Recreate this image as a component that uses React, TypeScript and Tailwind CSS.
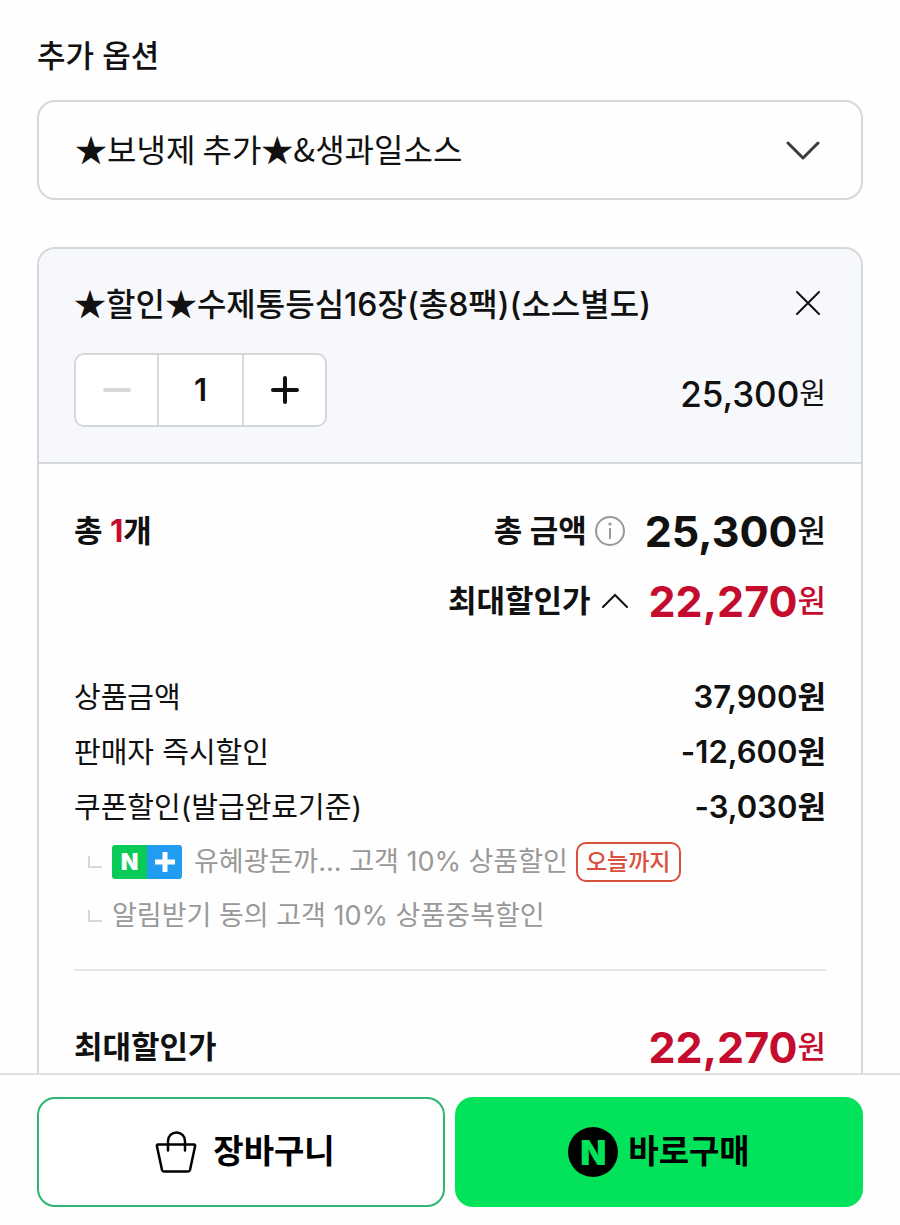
import { useState } from 'react';
import clsx from 'clsx';

const UNIT_PRICE = 37900;
const SELLER_DISCOUNT = 12600;
const COUPON_DISCOUNT = 3030;

const won = (value: number) => value.toLocaleString('en-US');

interface AmountProps {
  value: number;
  accent?: boolean;
}

function Amount({ value, accent }: AmountProps) {
  return (
    <span className={clsx('flex items-center text-[43px] font-bold', accent ? 'text-[#c40d2e]' : 'text-[#111]')}>
      {won(value)}
      <span className="text-[31px] font-medium">원</span>
    </span>
  );
}

interface PriceRowProps {
  label: string;
  value: number;
}

function PriceRow({ label, value }: PriceRowProps) {
  return (
    <div className="flex h-[55px] items-center justify-between">
      <dt>{label}</dt>
      <dd className="text-[31px] font-semibold">{won(value)}원</dd>
    </div>
  );
}

function Branch() {
  return <span className="ml-[14px] h-3 w-[14px] shrink-0 border-b-2 border-l-2 border-[#d9d9d9]" aria-hidden="true" />;
}

function MembershipBadge() {
  return (
    <span className="flex h-[34px] w-[70px] shrink-0 overflow-hidden rounded-[3px] text-white">
      <span className="flex flex-1 items-center justify-center bg-[#0bcb58] text-[23px] font-black">N</span>
      <span className="flex flex-1 items-center justify-center bg-[#209cf0]">
        <svg width="20" height="20" viewBox="0 0 20 20" fill="none" stroke="currentColor" strokeWidth="5" aria-hidden="true">
          <path d="M10 0v20M0 10h20" />
        </svg>
      </span>
    </span>
  );
}

export default function App() {
  const [quantity, setQuantity] = useState(1);
  const [open, setOpen] = useState(true);

  const salePrice = (UNIT_PRICE - SELLER_DISCOUNT) * quantity;
  const bestPrice = salePrice - COUPON_DISCOUNT * quantity;

  return (
    <div className="flex h-dvh flex-col bg-[#fefefe] font-['Inter','Noto_Sans_CJK_KR',sans-serif] text-[#111]">
      <main className="min-h-0 flex-1 overflow-y-auto px-[37px] pt-9 [scrollbar-width:none]">
        <label htmlFor="extra-option" className="block text-[31px] leading-10 font-medium">
          추가 옵션
        </label>
        <div className="relative mt-6">
          <select
            id="extra-option"
            className="h-[100px] w-full appearance-none rounded-[18px] border-2 border-[#d5d8da] bg-transparent px-9 pb-1 font-['Noto_Sans_CJK_KR',sans-serif] text-[32px]"
          >
            <option>★보냉제 추가★&amp;생과일소스</option>
          </select>
          <svg
            className="pointer-events-none absolute top-10 right-[43px] text-[#3c3c3c]"
            width="34"
            height="22"
            viewBox="0 0 34 22"
            fill="none"
            stroke="currentColor"
            strokeWidth="3"
            strokeLinecap="round"
            strokeLinejoin="round"
            aria-hidden="true"
          >
            <path d="M2 3l15 15L32 3" />
          </svg>
        </div>

        <section className="mt-[47px] rounded-t-[18px] border-2 border-b-0 border-[#d5d8da]">
          <div className="rounded-t-[16px] border-b-2 border-[#d5d8da] bg-[#f7f8fc] px-[35px] pt-9 pb-[35px]">
            <div className="flex items-start justify-between">
              <h2 className="text-[32px] leading-10 font-medium">
                <span className="font-['Noto_Sans_CJK_KR',sans-serif] leading-none">★할인★</span>
                수제통등심16장(총8팩)(소스별도)
              </h2>
              <button type="button" aria-label="삭제" className="mt-1 mr-1">
                <svg width="28" height="28" viewBox="0 0 28 28" fill="none" stroke="currentColor" strokeWidth="2" strokeLinecap="round">
                  <path d="M3 3l22 22M25 3L3 25" />
                </svg>
              </button>
            </div>
            <div className="mt-7 flex items-center justify-between">
              <div className="flex h-[74px] w-[253px] divide-x-2 divide-[#d5d8da] overflow-hidden rounded-[10px] border-2 border-[#d5d8da] bg-white">
                <button
                  type="button"
                  aria-label="수량 감소"
                  disabled={quantity === 1}
                  onClick={() => setQuantity(quantity - 1)}
                  className="flex flex-1 items-center justify-center disabled:text-[#d5d8da]"
                >
                  <svg width="28" height="28" viewBox="0 0 28 28" fill="none" stroke="currentColor" strokeWidth="4" strokeLinecap="round">
                    <path d="M2 14h24" />
                  </svg>
                </button>
                <input
                  aria-label="수량"
                  inputMode="numeric"
                  value={quantity}
                  onChange={(e) => setQuantity(Math.max(1, Number(e.target.value) || 1))}
                  className="w-[85px] text-center text-[31px] font-semibold"
                />
                <button
                  type="button"
                  aria-label="수량 증가"
                  onClick={() => setQuantity(quantity + 1)}
                  className="flex flex-1 items-center justify-center"
                >
                  <svg width="28" height="28" viewBox="0 0 28 28" fill="none" stroke="currentColor" strokeWidth="4" strokeLinecap="round">
                    <path d="M2 14h24M14 2v24" />
                  </svg>
                </button>
              </div>
              <p className="flex items-center pt-2 text-[35px] leading-10 font-medium">
                {won(salePrice)}
                <span className="text-[29px] font-normal">원</span>
              </p>
            </div>
          </div>

          <div className="px-[35px] pt-8 pb-12">
            <div className="flex h-[70px] items-center text-[31px] leading-[70px] font-bold">
              <p>
                총 <span className="text-[#c40d2e]">{quantity}</span>개
              </p>
              <span className="ml-auto">총 금액</span>
              <button type="button" aria-label="총 금액 안내" className="mr-5 ml-2 text-[#999]">
                <svg width="30" height="30" viewBox="0 0 30 30" fill="none" stroke="currentColor" strokeWidth="2">
                  <circle cx="15" cy="15" r="14" />
                  <path d="M15 12v11" />
                  <circle cx="15" cy="8" r="1.6" fill="currentColor" stroke="none" />
                </svg>
              </button>
              <Amount value={salePrice} />
            </div>
            <div className="flex h-[70px] items-center justify-end gap-5 text-[31px] leading-[70px] font-bold">
              <button type="button" aria-expanded={open} onClick={() => setOpen(!open)} className="flex items-center gap-[10px]">
                최대할인가
                <svg
                  className={clsx(!open && 'rotate-180')}
                  width="28"
                  height="16"
                  viewBox="0 0 28 16"
                  fill="none"
                  stroke="currentColor"
                  strokeWidth="2"
                  strokeLinecap="round"
                  aria-hidden="true"
                >
                  <path d="M2 14L14 2l12 12" />
                </svg>
              </button>
              <Amount value={bestPrice} accent />
            </div>

            {open && (
              <>
                <dl className="mt-[34px] text-[29px]">
                  <PriceRow label="상품금액" value={UNIT_PRICE * quantity} />
                  <PriceRow label="판매자 즉시할인" value={-SELLER_DISCOUNT * quantity} />
                  <PriceRow label="쿠폰할인(발급완료기준)" value={-COUPON_DISCOUNT * quantity} />
                </dl>
                <ul className="text-[27px] text-[#999]">
                  <li className="flex h-[54px] items-center">
                    <Branch />
                    <span className="mr-3 ml-[10px]">
                      <MembershipBadge />
                    </span>
                    유혜광돈까... 고객 10% 상품할인
                    <span className="ml-2 flex h-10 items-center rounded-[10px] border-2 border-[#d9503f] px-2 text-[23px] font-medium text-[#d9503f]">
                      오늘까지
                    </span>
                  </li>
                  <li className="flex h-[54px] items-center">
                    <Branch />
                    <span className="ml-[10px]">알림받기 동의 고객 10% 상품중복할인</span>
                  </li>
                </ul>
              </>
            )}

            <hr className="mt-[26px] border-t-2 border-[#e6e6e6]" />
            <div className="mt-[41px] flex h-[70px] items-center justify-between text-[31px] leading-[70px] font-bold">
              <span>최대할인가</span>
              <Amount value={bestPrice} accent />
            </div>
          </div>
        </section>
      </main>

      <footer className="grid grid-cols-2 gap-[10px] border-t-2 border-[#e0e0e0] px-[37px] pt-[22px] pb-[18px] text-[33px] font-bold text-black">
        <button type="button" className="flex h-[110px] items-center justify-center gap-4 rounded-[18px] border-2 border-[#2fb673] bg-white pl-2">
          <svg width="42" height="42" viewBox="0 0 42 42" fill="none" stroke="currentColor" strokeWidth="2.5" strokeLinecap="round" strokeLinejoin="round" aria-hidden="true">
            <path d="M3 13.500h36q1.500 0 1 2l-5 23.500q-.4 1.500-2 1.500H9q-1.600 0-2-1.500L2 15.500q-.5-2 1-2z" />
            <path d="M13 19.500V10a8.500 8.500 0 0 1 17 0v9.500" />
          </svg>
          장바구니
        </button>
        <button type="button" className="flex h-[110px] items-center justify-center gap-[10px] rounded-[18px] bg-[#02e25b]">
          <span className="flex size-[50px] items-center justify-center rounded-full bg-black text-[34px] font-black text-[#02e25b]">N</span>
          바로구매
        </button>
      </footer>
    </div>
  );
}
